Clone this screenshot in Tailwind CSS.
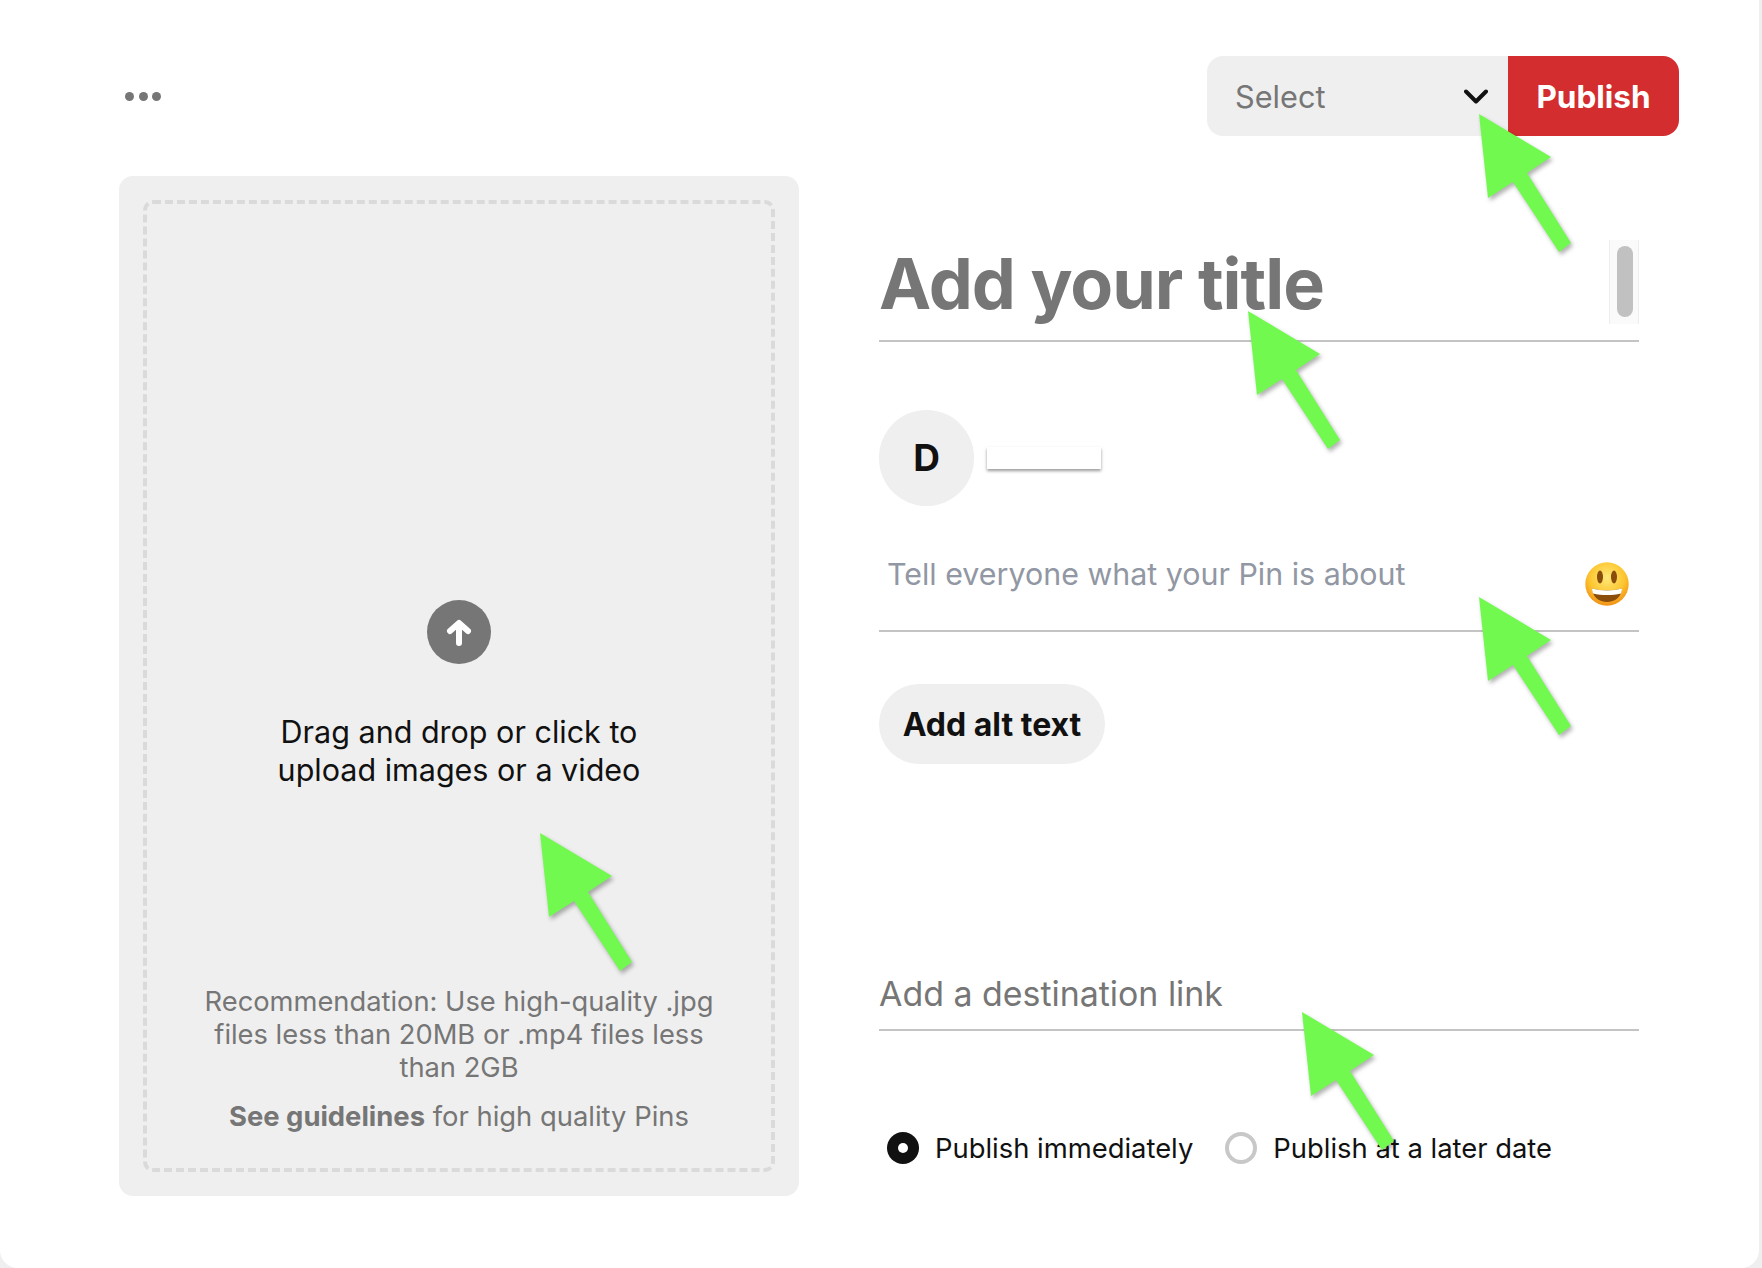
<!DOCTYPE html>
<html lang="en">
<head>
<meta charset="utf-8">
<title>Create Pin</title>
<script src="https://cdn.jsdelivr.net/npm/@tailwindcss/browser@4"></script>
</head>
<body class="bg-[#efefef] font-['Inter','Liberation_Sans',sans-serif] text-[#111111]">
<div class="relative w-[1762px] h-[1268px] overflow-hidden bg-[#efefef]">
  <main class="w-[1759px] h-[1268px] bg-white rounded-b-[18px] pl-[119px] pr-[80px] pt-[56px]">
    <header class="flex items-center justify-between h-[80px]">
      <div class="flex gap-[4.5px] pl-[6px]">
        <span class="w-[9px] h-[9px] rounded-full bg-[#767676]"></span>
        <span class="w-[9px] h-[9px] rounded-full bg-[#767676]"></span>
        <span class="w-[9px] h-[9px] rounded-full bg-[#767676]"></span>
      </div>
      <div class="flex h-[80px]">
        <div class="flex items-center justify-between w-[301px] pl-[28px] pr-[20px] bg-[#efefef] rounded-l-[16px] text-[30.7px] text-[#767676]">
          <span class="pt-[2px]">Select</span>
          <svg class="w-[24px] h-[15px]" viewBox="0 0 24 15" fill="none" stroke="#111111" stroke-width="4" stroke-linecap="round" stroke-linejoin="round"><path d="M2 2.5 12 12.5 22 2.5"/></svg>
        </div>
        <button class="w-[171px] pt-[2px] bg-[#d32d2f] rounded-r-[16px] text-white text-[31.5px] font-bold">Publish</button>
      </div>
    </header>
    <div class="flex gap-[80px] mt-[40px]">
      <section class="w-[680px] h-[1020px] p-[24px] bg-[#efefef] rounded-[14px]">
        <div class="flex flex-col items-center h-full border-[4px] border-dashed border-[#dadada] rounded-[10px] text-center">
          <div class="flex items-center justify-center w-[64px] h-[64px] mt-[396px] rounded-full bg-[#767676]">
            <svg class="w-[26px] h-[27px]" viewBox="0 0 26 27" fill="none" stroke="#ffffff" stroke-width="6" stroke-linecap="round" stroke-linejoin="round"><path d="M13 24V5M4 12 13 4 22 12"/></svg>
          </div>
          <p class="mt-[49px] text-[30.5px] leading-[38px]">Drag and drop or click to<br>upload images or a video</p>
          <p class="mt-[196px] text-[27.3px] leading-[33px] text-[#767676]">Recommendation: Use high-quality .jpg<br>files less than 20MB or .mp4 files less<br>than 2GB</p>
          <p class="mt-[16px] text-[27.4px] leading-[33px] text-[#767676]"><b class="font-bold">See guidelines</b> for high quality Pins</p>
        </div>
      </section>
      <section class="w-[760px]">
        <div class="relative h-[166px] border-b-2 border-[#c4c4c4] pt-[66px]">
          <h1 class="text-[70px] leading-[84px] font-bold text-[#767676] tracking-[-1px]">Add your title</h1>
          <div class="absolute right-0 top-[64px] w-[30px] h-[84px] px-[7px] py-[6px] bg-[#fafafa] border-x border-[#eeeeee]">
            <div class="w-[16px] h-[71px] rounded-full bg-[#c1c1c1]"></div>
          </div>
        </div>
        <div class="flex items-center gap-[13px] mt-[68px]">
          <div class="flex items-center justify-center w-[95px] h-[96px] rounded-full bg-[#efefef] text-[37px] font-bold">D</div>
          <div class="w-[114px] h-[22px] bg-white shadow-[0_2px_3px_rgba(0,0,0,0.4)]"></div>
        </div>
        <div class="relative flex items-start justify-between h-[126px] border-b-2 border-[#c4c4c4] pl-[8px] pr-[10px] pt-[48px]">
          <span class="text-[30.4px] leading-[40px] text-[#9197a3]">Tell everyone what your Pin is about</span>
          <svg class="w-[44px] h-[44px] mt-[8px]" viewBox="0 0 44 44">
            <defs>
              <radialGradient id="face" cx="50%" cy="35%" r="68%">
                <stop offset="0" stop-color="#ffe97a"/>
                <stop offset="0.6" stop-color="#fdc52f"/>
                <stop offset="1" stop-color="#ef8a12"/>
              </radialGradient>
            </defs>
            <circle cx="22" cy="22" r="21.7" fill="url(#face)"/>
            <ellipse cx="15" cy="15" rx="3" ry="6.5" fill="#8a4d0c"/>
            <ellipse cx="29" cy="15" rx="3" ry="6.5" fill="#8a4d0c"/>
            <path d="M7 26.5C16 29 28 29 37 26.5 36.5 35 30 40 22 40 14 40 7.500 35 7 26.5Z" fill="#8a4d0c"/>
            <path d="M7 26.500C16 29 28 29 37 26.500 37 28.500 36.500 30 36 31.500 27 33.500 17 33.500 8 31.500 7.500 30 7 28.500 7 26.500Z" fill="#ffffff"/>
          </svg>
        </div>
        <button class="block mt-[52px] h-[80px] w-[226px] pt-[2px] rounded-full bg-[#efefef] text-[32px] font-bold">Add alt text</button>
        <div class="h-[267px] border-b-2 border-[#c4c4c4] pt-[210px]">
          <span class="block text-[33.9px] leading-[40px] text-[#767676]">Add a destination link</span>
        </div>
        <div class="flex items-center mt-[101px] pl-[8px] text-[27.4px] leading-[32px]">
          <span class="flex items-center justify-center w-[32px] h-[32px] rounded-full bg-[#111111]"><span class="w-[10px] h-[10px] rounded-full bg-white"></span></span>
          <span class="ml-[16px]">Publish immediately</span>
          <span class="ml-[32px] w-[32px] h-[32px] rounded-full border-[4px] border-[#c8c8c8]"></span>
          <span class="ml-[16px]">Publish at a later date</span>
        </div>
      </section>
    </div>
  </main>
  <svg class="absolute inset-0 pointer-events-none" width="1762" height="1268" viewBox="0 0 1762 1268" fill="#72f94f" style="filter:drop-shadow(2px 3px 2px rgba(0,0,0,0.3))">
    <polygon transform="translate(1479 114)" points="0,0 72,43 48,59 92,129 80,138 34,68 9,84"/>
    <polygon transform="translate(1248 311)" points="0,0 72,43 48,59 92,129 80,138 34,68 9,84"/>
    <polygon transform="translate(1479 597)" points="0,0 72,43 48,59 92,129 80,138 34,68 9,84"/>
    <polygon transform="translate(540 833)" points="0,0 72,43 48,59 92,129 80,138 34,68 9,84"/>
    <polygon transform="translate(1302 1012)" points="0,0 72,43 48,59 92,129 80,138 34,68 9,84"/>
  </svg>
</div>
</body>
</html>
